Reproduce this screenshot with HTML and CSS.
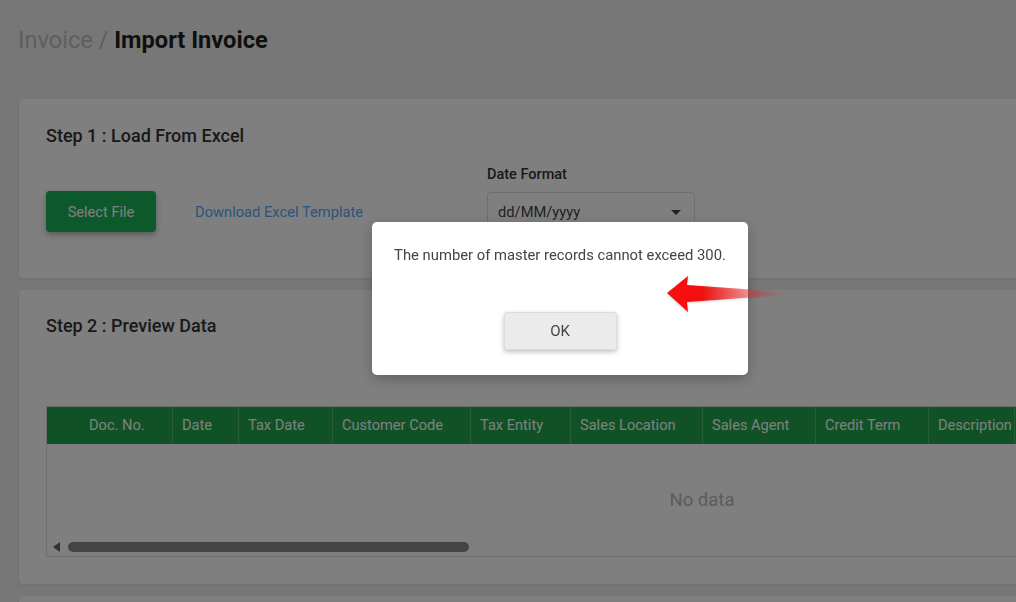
FILE: index.html
```html
<!DOCTYPE html>
<html lang="en">
<head>
    <meta charset="UTF-8">
    <meta name="viewport" content="width=device-width, initial-scale=1.0">
    <title>Import Invoice</title>
    <link rel="stylesheet" href="styles.css">
</head>
<body>
    <div class="page">
        <h1 class="breadcrumb"><span class="crumb">Invoice / </span>Import Invoice</h1>

        <div class="card">
            <h2>Step 1 : Load From Excel</h2>
            <div class="load-row">
                <div class="file-actions">
                    <button class="btn-primary">Select File</button>
                    <a class="link" href="#">Download Excel Template</a>
                </div>
                <div class="field">
                    <label>Date Format</label>
                    <div class="select">
                        <span>dd/MM/yyyy</span>
                        <span class="caret"></span>
                    </div>
                </div>
            </div>
        </div>

        <div class="card preview">
            <h2>Step 2 : Preview Data</h2>
            <div class="grid">
                <div class="grid-head">
                    <div class="col first" style="width:126px">Doc. No.</div>
                    <div class="col" style="width:66px">Date</div>
                    <div class="col" style="width:94px">Tax Date</div>
                    <div class="col" style="width:138px">Customer Code</div>
                    <div class="col" style="width:100px">Tax Entity</div>
                    <div class="col" style="width:132px">Sales Location</div>
                    <div class="col" style="width:113px">Sales Agent</div>
                    <div class="col" style="width:113px">Credit Term</div>
                    <div class="col" style="width:86px">Description</div>
                </div>
                <div class="grid-body">No data</div>
                <div class="scrollbar">
                    <span class="scroll-arrow"></span>
                    <span class="scroll-thumb"></span>
                </div>
            </div>
        </div>

        <div class="card card-next"></div>
    </div>

    <div class="overlay">
        <div class="dialog">
            <p>The number of master records cannot exceed 300.</p>
            <button class="btn-ok">OK</button>
        </div>
        <svg class="pointer" width="125" height="40" viewBox="0 0 125 40">
            <defs>
                <linearGradient id="fade" x1="0" y1="0" x2="1" y2="0">
                    <stop offset="0" stop-color="#ff0d0d"/>
                    <stop offset="0.3" stop-color="#f01010"/>
                    <stop offset="1" stop-color="#e83030" stop-opacity="0"/>
                </linearGradient>
            </defs>
            <polygon points="2,19 23,2 22,11 120,18 120,21 22,28 23,38" fill="url(#fade)"/>
        </svg>
    </div>
</body>
</html>
```

FILE: styles.css
```css
:root {
    --green: #20a44c;
    --green-btn: #1cb256;
    --link: #5aa8f4;
    --border: #dddddd;
    --background: #eeeeee;
    --text: #222222;
}

html, body {
    margin: 0;
    overflow: hidden;
}

body {
    font-family: Roboto, 'Liberation Sans', sans-serif;
    background: var(--background);
    color: var(--text);
    height: 602px;
}

.page {
    width: 1366px;
    padding: 26px 0 0 19px;
}

.breadcrumb {
    margin: 0 0 45px -1px;
    font-size: 23.6px;
    line-height: 28px;
    font-weight: 700;
    color: #1e1e1e;
}

.crumb {
    font-weight: 400;
    color: #bdbdbd;
}

.card {
    background: #fff;
    border-radius: 4px;
    box-shadow: 0 1px 3px rgba(0, 0, 0, 0.08);
    padding: 27px 27px 46px;
    margin-bottom: 12px;
}

.card h2 {
    margin: 0;
    font-size: 18px;
    line-height: 20px;
    font-weight: 500;
    color: #333;
}

.load-row {
    display: flex;
    align-items: flex-end;
    margin-top: 19px;
}

.file-actions {
    width: 441px;
    display: flex;
    align-items: center;
}

.btn-primary {
    width: 110px;
    height: 41px;
    border: none;
    border-radius: 4px;
    background: var(--green-btn);
    color: #fff;
    font-family: inherit;
    font-size: 14.6px;
    box-shadow: 0 3px 6px rgba(0, 0, 0, 0.3);
}

.link {
    margin-left: 39px;
    color: var(--link);
    font-size: 14.7px;
    text-decoration: none;
}

.field label {
    display: block;
    font-size: 14.5px;
    line-height: 20px;
    font-weight: 500;
    margin-bottom: 7px;
    color: #333;
}

.select {
    width: 208px;
    height: 40px;
    box-sizing: border-box;
    border: 1px solid var(--border);
    border-radius: 4px;
    display: flex;
    align-items: center;
    justify-content: space-between;
    padding: 0 13px 0 10px;
    font-size: 14.7px;
    color: #444;
}

.caret {
    border-left: 5px solid transparent;
    border-right: 5px solid transparent;
    border-top: 5px solid #444;
}

.preview {
    padding-top: 26px;
    padding-bottom: 27px;
}

.grid {
    margin-top: 70px;
    border: 1px solid var(--border);
}

.grid-head {
    display: flex;
    height: 37px;
    background: var(--green);
}

.col {
    box-sizing: border-box;
    flex: none;
    padding-left: 9px;
    border-right: 1px solid #56b877;
    color: #fff;
    font-size: 14.6px;
    line-height: 37px;
    white-space: nowrap;
}

.col.first {
    padding-left: 42px;
}

.grid-body {
    height: 93px;
    text-align: center;
    line-height: 112px;
    font-size: 18.5px;
    color: #b8b8b8;
}

.scrollbar {
    height: 19px;
    display: flex;
    align-items: center;
    padding-left: 6px;
}

.scroll-arrow {
    border-top: 5px solid transparent;
    border-bottom: 5px solid transparent;
    border-right: 7px solid #666;
}

.scroll-thumb {
    margin-left: 8px;
    width: 401px;
    height: 10px;
    border-radius: 5px;
    background: #888;
}

.card-next {
    height: 40px;
}

.overlay {
    position: fixed;
    inset: 0;
    background: rgba(0, 0, 0, 0.5);
}

.dialog {
    position: absolute;
    left: 372px;
    top: 222px;
    width: 376px;
    height: 153px;
    box-sizing: border-box;
    background: #fff;
    border-radius: 5px;
    box-shadow: 0 4px 14px rgba(0, 0, 0, 0.25);
    padding-top: 23px;
    text-align: center;
}

.dialog p {
    margin: 0 0 47px;
    font-size: 14.8px;
    line-height: 20px;
    color: #444;
}

.btn-ok {
    width: 113px;
    height: 38px;
    border: 1px solid #dcdcdc;
    border-radius: 3px;
    background: #ebebeb;
    color: #444;
    font-family: inherit;
    font-size: 15px;
    box-shadow: 0 2px 5px rgba(0, 0, 0, 0.25);
}

.pointer {
    position: absolute;
    left: 665px;
    top: 274px;
    filter: drop-shadow(0 1px 1px rgba(0, 0, 0, 0.2));
}
```
